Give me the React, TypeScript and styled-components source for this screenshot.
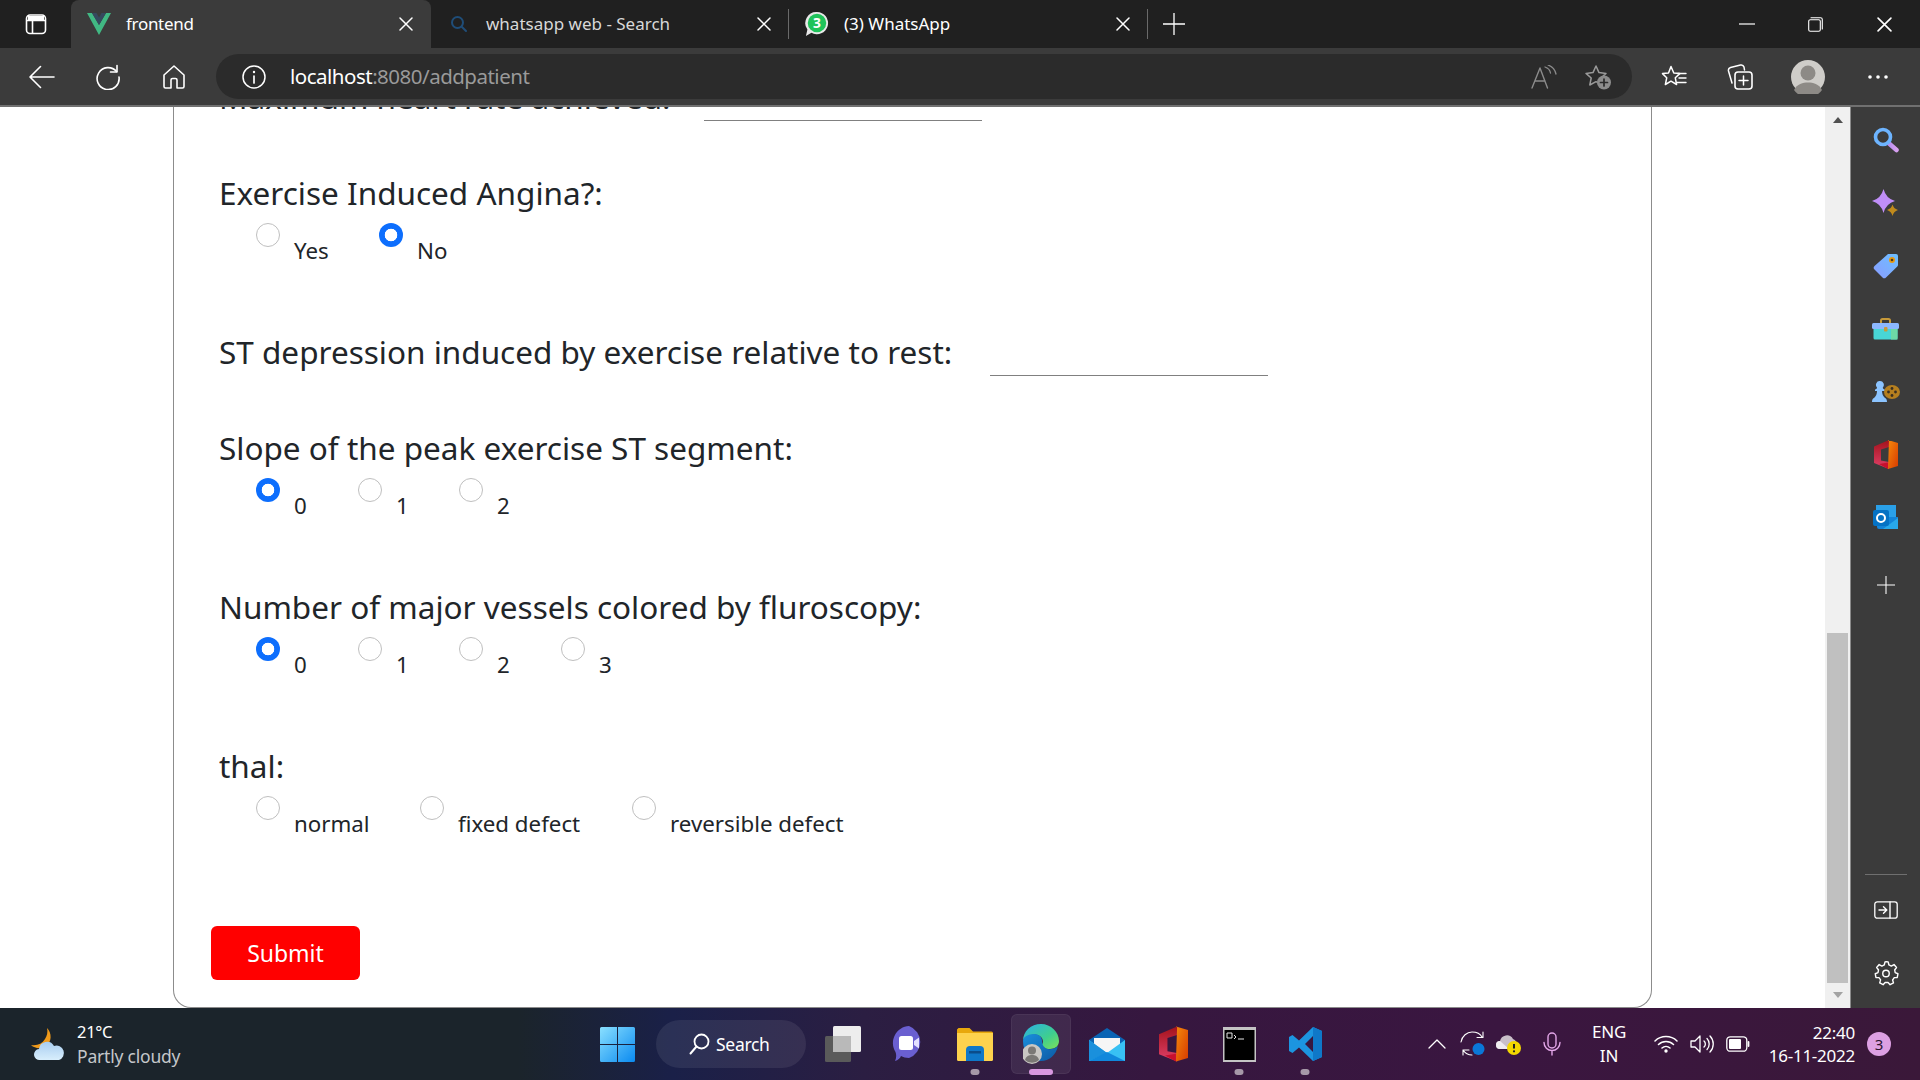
import React from 'react';
import styled, {createGlobalStyle} from 'styled-components';

const Global = createGlobalStyle`
  html, body { margin: 0; padding: 0; height: 1080px; overflow: hidden; background: #fff; }
  * { box-sizing: border-box; }
  body { font-family: "Noto Sans", "Open Sans", sans-serif; }
`;

const Screen = styled.div`
  width: 1920px;
  height: 1080px;
  display: flex;
  flex-direction: column;
  overflow: hidden;
`;

/* ---------- tab strip ---------- */
const TabStrip = styled.div`
  height: 48px;
  flex: none;
  background: #202020;
  display: flex;
  align-items: stretch;
  color: #fff;
  font-size: 17px;
`;
const WindowButton = styled.div`
  width: 71px;
  display: flex;
  align-items: center;
  justify-content: center;
`;
const Tab = styled.div<{$active?: boolean; $w: number}>`
  width: ${p => p.$w}px;
  display: flex;
  align-items: center;
  padding: 0 ${p => (p.$active ? 18 : 17)}px 0 16px;
  background: ${p => (p.$active ? '#3b3b3b' : 'transparent')};
  border-radius: 8px 8px 0 0;
`;
const TabIcon = styled.span`
  width: 24px;
  height: 24px;
  flex: none;
  display: flex;
  align-items: center;
  justify-content: center;
`;
const TabTitle = styled.span<{$dim?: boolean; $active?: boolean}>`
  flex: 1;
  margin: -2px 0 0 15px;
  white-space: nowrap;
  letter-spacing: ${p => (p.$active ? '-0.3px' : '0')};
  color: ${p => (p.$dim ? '#d8d8d8' : '#fff')};
`;
const TabSep = styled.div`
  width: 1px;
  height: 30px;
  background: #6a6a6a;
  align-self: center;
  flex: none;
`;
const NewTab = styled.div`
  width: 52px;
  display: flex;
  align-items: center;
  justify-content: center;
`;
const WindowControls = styled.div`
  margin-left: auto;
  display: flex;
  padding-right: 1px;
`;
const WindowControl = styled.div`
  width: 69px;
  display: flex;
  align-items: center;
  justify-content: center;
`;

/* ---------- toolbar ---------- */
const Toolbar = styled.div`
  height: 59px;
  flex: none;
  background: #3b3b3b;
  border-bottom: 2px solid #707070;
  display: flex;
  align-items: flex-start;
  padding: 6px 9px 0 9px;
`;
const ToolSlot = styled.div<{$w?: number}>`
  width: ${p => p.$w ?? 66}px;
  height: 45px;
  flex: none;
  display: flex;
  align-items: center;
  justify-content: center;
`;
const AddressBar = styled.div`
  width: 1416px;
  height: 45px;
  margin-left: 9px;
  margin-right: 9px;
  flex: none;
  background: #2b2b2b;
  border-radius: 23px;
  display: flex;
  align-items: center;
  padding-left: 26px;
`;
const AddressText = styled.div`
  margin: -2px 0 0 24px;
  flex: 1;
  font-size: 20.5px;
  letter-spacing: -0.5px;
  color: #fff;
  & > span { color: #9a9a9a; }
`;
const AddressAction = styled.div`
  width: 54px;
  display: flex;
  justify-content: center;
  &:last-child { margin-right: 7px; }
`;

/* ---------- page area ---------- */
const Main = styled.div`
  flex: 1;
  min-height: 0;
  display: flex;
`;
const Viewport = styled.div`
  flex: 1;
  min-width: 0;
  background: #fff;
  padding: 0 173px;
  overflow: hidden;
`;
const Card = styled.div`
  display: flow-root;
  height: 901px;
  border: 1px solid #8c8c8c;
  border-top: none;
  border-radius: 0 0 18px 18px;
  padding: 0 0 0 37px;
`;
const Form = styled.form`
  margin-top: -32px;
`;
const Field = styled.div`
  padding-left: 8px;
  margin-bottom: 48px;
`;
const TextRow = styled(Field)`
  display: flex;
  align-items: flex-end;
`;
const Heading = styled.label`
  display: block;
  font-size: 31.5px;
  line-height: 44px;
  height: 48px;
  color: #212529;
  white-space: nowrap;
`;
const TextInput = styled.input<{$gap: number}>`
  width: 278px;
  height: 40px;
  margin: 0 0 2px ${p => p.$gap}px;
  border: none;
  border-bottom: 1px solid #808080;
  outline: none;
  background: transparent;
`;
const Options = styled.div`
  height: 63px;
  padding: 4px 0 0 37px;
  display: flex;
`;
const Option = styled.label<{$w: number}>`
  width: ${p => p.$w}px;
  flex: none;
  display: flex;
  align-items: flex-start;
`;
const Radio = styled.input.attrs({type: 'radio'})`
  appearance: none;
  width: 24px;
  height: 24px;
  margin: 0;
  flex: none;
  border-radius: 50%;
  border: 1px solid #bfbfbf;
  background: #fff;
  &:checked {
    border: none;
    background: radial-gradient(circle, #fff 0, #fff 6px, #0d6efd 6.6px);
  }
`;
const OptionText = styled.span`
  margin: 12px 0 0 14px;
  font-size: 22.3px;
  line-height: 32px;
  color: #212529;
  white-space: nowrap;
`;
const SubmitButton = styled.button`
  display: block;
  width: 149px;
  height: 54px;
  margin-top: 71px;
  border: none;
  border-radius: 6px;
  background: #ff0000;
  color: #fff;
  font-family: inherit;
  font-size: 23px;
`;

/* ---------- scrollbar + sidebar ---------- */
const Scrollbar = styled.div`
  width: 26px;
  flex: none;
  background: #f0f0f0;
  border-right: 1px solid #8a8a8a;
  display: flex;
  flex-direction: column;
  align-items: center;
`;
const ScrollArrow = styled.div<{$down?: boolean}>`
  width: 0;
  height: 0;
  flex: none;
  margin: ${p => (p.$down ? '9px 0 0' : '10px 0 0')};
  border-left: 5.5px solid transparent;
  border-right: 5.5px solid transparent;
  ${p => (p.$down ? 'border-top: 6px solid #a3a3a3;' : 'border-bottom: 6px solid #505050;')}
`;
const ScrollThumb = styled.div`
  width: 21px;
  height: 350px;
  margin-top: 510px;
  background: #c0c0c0;
  flex: none;
`;
const Sidebar = styled.div`
  width: 69px;
  flex: none;
  background: #3b3b3b;
  display: flex;
  flex-direction: column;
  align-items: center;
  padding: 1px 0 4px;
`;
const SideSlot = styled.div<{$h?: number}>`
  width: 100%;
  height: ${p => p.$h ?? 63}px;
  flex: none;
  display: flex;
  align-items: center;
  justify-content: center;
`;
const SideDivider = styled.div`
  width: 42px;
  height: 1px;
  background: #6f6f6f;
  margin-top: auto;
  margin-bottom: 3px;
  flex: none;
`;

/* ---------- taskbar ---------- */
const Taskbar = styled.div`
  height: 72px;
  flex: none;
  background: linear-gradient(90deg, #1b242b 0, #1b242b 27%, #1a2048 35%, #2b1e42 45%, #36173f 60%, #3a1640 78%, #3a1839 100%);
  display: flex;
  align-items: center;
  color: #fff;
`;
const Weather = styled.div`
  width: 584px;
  flex: none;
  display: flex;
  align-items: center;
  padding-left: 30px;
`;
const WeatherText = styled.div`
  margin-left: 11px;
  font-size: 17.5px;
  line-height: 25px;
  letter-spacing: -0.2px;
  & > div:first-child { font-size: 16.5px; letter-spacing: -0.3px; }
  & > div:last-child { color: #c4c7ca; }
`;
const TaskSlot = styled.div`
  width: 66px;
  height: 60px;
  flex: none;
  position: relative;
  display: flex;
  align-items: center;
  justify-content: center;
`;
const ActiveSlot = styled(TaskSlot)`
  &::before {
    content: '';
    position: absolute;
    left: 3px;
    right: 3px;
    top: 0;
    bottom: 0;
    border-radius: 6px;
    background: rgba(255, 255, 255, 0.07);
    border: 1px solid rgba(255, 255, 255, 0.05);
  }
  & > svg { position: relative; }
`;
const RunDot = styled.span<{$active?: boolean}>`
  position: absolute;
  bottom: -1px;
  left: 50%;
  transform: translateX(-50%);
  width: ${p => (p.$active ? 24 : 9)}px;
  height: 6px;
  border-radius: 3px;
  background: ${p => (p.$active ? '#d998e0' : '#a698a8')};
`;
const SearchPill = styled.div`
  width: 150px;
  height: 48px;
  flex: none;
  margin: 0 4px 0 6px;
  border-radius: 24px;
  background: rgba(255, 255, 255, 0.08);
  display: flex;
  align-items: center;
  padding-left: 33px;
  font-size: 17.5px;
  letter-spacing: -0.3px;
  gap: 6px;
`;
const Tray = styled.div`
  margin-left: 81px;
  display: flex;
  align-items: center;
  flex: 1;
`;
const TraySlot = styled.div<{$w?: number; $gap?: number}>`
  width: ${p => p.$w ?? 36}px;
  margin-left: ${p => p.$gap ?? 0}px;
  flex: none;
  display: flex;
  align-items: center;
  justify-content: center;
`;
const LangText = styled.div`
  font-size: 17px;
  line-height: 24px;
  text-align: center;
  letter-spacing: -0.2px;
`;
const Clock = styled.div`
  width: 99px;
  flex: none;
  text-align: right;
  font-size: 17px;
  line-height: 23px;
  letter-spacing: -0.25px;
`;
const Badge = styled.div`
  width: 24px;
  height: 24px;
  margin-left: 12px;
  border-radius: 50%;
  flex: none;
  background: #dda0e3;
  color: #2b1430;
  font-size: 15px;
  display: flex;
  align-items: center;
  justify-content: center;
`;

/* ---------- drawings ---------- */
type IconProps = {s?: number; c?: string};
const stroke = (c: string, w = 1.5) => ({fill: 'none', stroke: c, strokeWidth: w, strokeLinecap: 'round' as const, strokeLinejoin: 'round' as const});

const XIcon = ({s = 14, c = '#fff'}: IconProps) => (
  <svg width={s} height={s} viewBox="0 0 14 14"><path d="M1 1l12 12M13 1L1 13" {...stroke(c, 1.5)}/></svg>
);
const PlusIcon = ({s = 22, c = '#fff'}: IconProps) => (
  <svg width={s} height={s} viewBox="0 0 22 22"><path d="M11 0v22M0 11h22" {...stroke(c, 1.3)}/></svg>
);
const TabsIcon = () => (
  <svg width="22" height="22" viewBox="0 0 22 22"><rect x="1.5" y="2" width="19" height="18.5" rx="3.5" {...stroke('#fff', 1.6)}/><path d="M2 7.5h18M7.5 7.5v12.5" {...stroke('#fff', 1.6)}/><path d="M3 3h16v4.5H3z" fill="#fff"/></svg>
);
const VueLogo = () => (
  <svg width="24" height="22" viewBox="0 0 24 22"><path d="M0 0h5l7 12 7-12h5L12 22z" fill="#41b883"/><path d="M5 0h4.5L12 4.5 14.5 0H19l-7 12z" fill="#35495e"/></svg>
);
const BingSearch = () => (
  <svg width="18" height="18" viewBox="0 0 18 18"><circle cx="7.5" cy="7.5" r="5.5" {...stroke('#1f4d78', 2)}/><path d="M12 12l4 4" {...stroke('#1f4d78', 2)}/></svg>
);
const WhatsAppBadge = () => (
  <svg width="26" height="28" viewBox="0 0 26 28">
    <path d="M13 1a12 12 0 1 1-6 22.4L1 27l1.6-7A12 12 0 0 1 13 1z" fill="#e8e8e8"/>
    <circle cx="13" cy="13" r="10" fill="#1fc35a"/>
    <text x="13" y="18.5" textAnchor="middle" fontSize="15" fontWeight="700" fill="#fff" fontFamily="Noto Sans">3</text>
  </svg>
);
const BackIcon = () => (
  <svg width="26" height="24" viewBox="0 0 26 24"><path d="M25 12H1.5M11.5 1.5L1 12l10.5 10.5" {...stroke('#fff', 1.6)}/></svg>
);
const RefreshIcon = () => (
  <svg width="26" height="26" viewBox="0 0 26 26"><path d="M21.5 7.5A11 11 0 1 0 24 13" {...stroke('#fff', 1.6)}/><path d="M22 1.5v6.5h-6.5" {...stroke('#fff', 1.6)}/></svg>
);
const HomeIcon = () => (
  <svg width="24" height="26" viewBox="0 0 24 26"><path d="M12 2L2 11v11.5a1.5 1.5 0 0 0 1.5 1.5H9v-8a1.5 1.5 0 0 1 1.5-1.5h3A1.5 1.5 0 0 1 15 16v8h5.5a1.5 1.5 0 0 0 1.5-1.5V11z" {...stroke('#fff', 1.6)}/></svg>
);
const InfoIcon = () => (
  <svg width="24" height="24" viewBox="0 0 24 24"><circle cx="12" cy="12" r="11" {...stroke('#fff', 1.5)}/><path d="M12 11v7" {...stroke('#fff', 1.7)}/><circle cx="12" cy="7" r="1.2" fill="#fff"/></svg>
);
const ReadAloudIcon = () => (
  <svg width="26" height="24" viewBox="0 0 26 24"><path d="M1 23L9 3l7.5 20M4 16h10" {...stroke('#8c8c8c', 1.4)}/><path d="M14 2c3 1 5 3 5.5 6M17 0c4 1.5 7 4.5 8 9" {...stroke('#8c8c8c', 1.3)}/></svg>
);
const StarPath = 'M12 2l3 6.6 7 .8-5.2 4.8 1.4 7-6.2-3.5L5.8 21l1.4-7L2 9.4l7-.8z';
const FavAddIcon = () => (
  <svg width="28" height="26" viewBox="0 0 28 26"><path d={StarPath} {...stroke('#9a9a9a', 1.5)}/><circle cx="20" cy="18.5" r="7" fill="#8c8c8c"/><path d="M20 15v7M16.5 18.5h7" {...stroke('#2b2b2b', 1.7)}/></svg>
);
const FavoritesIcon = () => (
  <svg width="26" height="24" viewBox="0 0 26 24"><path d="M10 1.5l2.8 6.5 6 .6-4.500 4.200 1.300 6.700-5.600-3.300-5.600 3.300 1.300-6.700L1.500 8.600l6-.6z" {...stroke('#fff', 1.5)}/><path d="M17 8.500h8M18 13h7M16 17.500h9" {...stroke('#fff', 1.4)}/></svg>
);
const CollectionsIcon = () => (
  <svg width="26" height="26" viewBox="0 0 26 26"><path d="M5 19L1.500 7a3 3 0 0 1 2-3.500l10-2.500a3 3 0 0 1 3.500 2l.5 3" {...stroke('#fff', 1.5)}/><rect x="8" y="8" width="17" height="17" rx="3" {...stroke('#fff', 1.6)}/><path d="M16.500 12v9M12 16.500h9" {...stroke('#fff', 1.5)}/></svg>
);
const Avatar = () => (
  <svg width="34" height="34" viewBox="0 0 34 34"><circle cx="17" cy="17" r="17" fill="#cfcdc9"/><circle cx="17" cy="13" r="7.500" fill="#8d8a86"/><path d="M3 30c3-6 9-7.500 14-7.500S28 24 31 30a17 17 0 0 1-28 0z" fill="#8d8a86"/></svg>
);
const DotsIcon = () => (
  <svg width="20" height="4" viewBox="0 0 20 4"><circle cx="2" cy="2" r="1.800" fill="#fff"/><circle cx="10" cy="2" r="1.800" fill="#fff"/><circle cx="18" cy="2" r="1.800" fill="#fff"/></svg>
);
const MinIcon = () => <svg width="16" height="2" viewBox="0 0 16 2"><path d="M0 1h16" stroke="#fff" strokeWidth="1.2"/></svg>;
const RestoreIcon = () => (
  <svg width="15" height="15" viewBox="0 0 15 15"><rect x=".7" y="2.700" width="11.600" height="11.600" rx="1.600" {...stroke('#fff', 1.1)}/><path d="M3 .7h9.500a1.800 1.800 0 0 1 1.800 1.800V12" {...stroke('#fff', 1.1)}/></svg>
);

const SideSearch = () => (
  <svg width="26" height="26" viewBox="0 0 26 26"><defs><linearGradient id="sh" x1="0" x2="1"><stop offset="0" stopColor="#b48cf0"/><stop offset="1" stopColor="#d8a0f0"/></linearGradient></defs><path d="M15.500 16l8 7" stroke="url(#sh)" strokeWidth="4.500" strokeLinecap="round"/><circle cx="10" cy="10" r="7.500" fill="none" stroke="#6db4ff" strokeWidth="3.600"/></svg>
);
const SideSparkle = () => (
  <svg width="27" height="27" viewBox="0 0 27 27"><path d="M11.500 0Q14 9.500 23 12Q14 14.500 11.500 24Q9 14.500 0 12Q9 9.500 11.500 0z" fill="#c08ef8"/><path d="M20.500 15.500Q21.500 19.500 26 21Q21.500 22.500 20.500 27Q19.500 22.500 15 21Q19.500 19.500 20.500 15.500z" fill="#c08a1c"/></svg>
);
const SideTag = () => (
  <svg width="26" height="26" viewBox="0 0 26 26"><defs><linearGradient id="tg" x1="0" y1="1" x2="1" y2="0"><stop offset="0" stopColor="#8a9cff"/><stop offset="1" stopColor="#6cc0ff"/></linearGradient></defs><path d="M15 1h8a2 2 0 0 1 2 2v9a2 2 0 0 1-.7 1.500L13 24.500a2.500 2.500 0 0 1-3.500 0L1.500 16.500a2.500 2.500 0 0 1 0-3.500z" fill="url(#tg)"/><circle cx="19" cy="7" r="3" fill="#e89a10"/><circle cx="19" cy="7" r="1.300" fill="#4a3a20"/></svg>
);
const SideToolbox = () => (
  <svg width="27" height="22" viewBox="0 0 27 22"><path d="M9 5V2.500a1.500 1.500 0 0 1 1.500-1.500h6A1.500 1.500 0 0 1 18 2.500V5" fill="none" stroke="#c79a3a" strokeWidth="2"/><rect x="1.500" y="8" width="24" height="13.500" rx="1.500" fill="#48d6d6"/><rect x="19" y="8" width="6.500" height="13.500" fill="#6ed9a6"/><rect x="0" y="5" width="27" height="6" rx="1.500" fill="#8cb8ff"/><rect x="12" y="9" width="3.500" height="4.500" rx="1" fill="#c79a3a"/></svg>
);
const SideGames = () => (
  <svg width="28" height="22" viewBox="0 0 28 22"><path d="M8 0a3.800 3.800 0 0 1 2.800 6.400c0 1 .7 1.600 2 2v1.500H10c0 3 1 5 3 7 1.500.5 2 2 2 4.100H0c0-2 .5-3.600 2-4.100 2-2 3-4 3-7H3V8.400c1.300-.4 2-1 2-2A3.800 3.800 0 0 1 8 0z" fill="#8cc4ff"/><ellipse cx="20" cy="11" rx="8" ry="7" fill="#b57f1f"/><g fill="#3b2f20"><circle cx="20" cy="7.500" r="1.400"/><circle cx="16.500" cy="11" r="1.400"/><circle cx="23.500" cy="11" r="1.400"/><circle cx="20" cy="14.500" r="1.400"/></g></svg>
);
const OfficeIcon = ({w = 24, h = 29}: {w?: number; h?: number}) => (
  <svg width={w} height={h} viewBox="0 0 24 29"><defs><linearGradient id="of" x1="0" y1="0" x2="1" y2="1"><stop offset="0" stopColor="#f58a0b"/><stop offset="1" stopColor="#d83b01"/></linearGradient><linearGradient id="ofr" x1="0" y1="0" x2="0" y2="1"><stop offset="0" stopColor="#a3121b"/><stop offset="1" stopColor="#e0416a"/></linearGradient></defs><path d="M0 6.500L15 0v7L7 9.500v11l8 1.500v7L0 23z" fill="url(#ofr)"/><path d="M14 0l10 3v23l-10 3 1-29z" fill="url(#of)"/><path d="M5 24l9-1.500V29z" fill="#c8102e"/></svg>
);
const OutlookIcon = () => (
  <svg width="25" height="25" viewBox="0 0 25 25"><rect x="3" y="0" width="20" height="12" fill="#2aa0e8"/><path d="M4 12h21v10a2 2 0 0 1-2 2H6a2 2 0 0 1-2-2z" fill="#1384d8"/><path d="M10 24L25 13v11z" fill="#28a8ea"/><rect x="0" y="5" width="16" height="16" rx="2" fill="#0572c4"/><circle cx="8" cy="13" r="4" fill="none" stroke="#fff" strokeWidth="2"/></svg>
);
const SidePaneIcon = () => (
  <svg width="24" height="18" viewBox="0 0 24 18"><rect x=".8" y=".8" width="22.400" height="16.400" rx="2.500" {...stroke('#fff', 1.3)}/><path d="M16 1v16M5 9h7.500M9.500 5.800L12.800 9l-3.300 3.200" {...stroke('#fff', 1.4)}/></svg>
);
const GearIcon = () => (
  <svg width="26" height="26" viewBox="0 0 24 24"><path d="M12.200 1.500l1.800.3.700 2.800 2.200 1 2.500-1.400 2.300 2.700-1.700 2.300.5 2.400 2.500 1.100-.6 3.400-2.800.2-1.400 2-.1.100.8 2.700-3.100 1.700-1.900-2.100h-2.700l-1.900 2.100-3.100-1.700.8-2.800-1.500-2-2.800-.2-.6-3.400 2.500-1.100.5-2.400-1.700-2.300 2.300-2.700 2.500 1.400 2.200-1 .7-2.800z" {...stroke('#fff', 1.3)}/><circle cx="12" cy="12.500" r="3" {...stroke('#fff', 1.3)}/></svg>
);

const WeatherIcon = () => (
  <svg width="36" height="33" viewBox="0 0 36 33"><defs><linearGradient id="cl" x1="0" y1="0" x2="0" y2="1"><stop offset="0" stopColor="#a8cdf0"/><stop offset="1" stopColor="#d8eefc"/></linearGradient></defs><path d="M17 0c5 5 5 14-1 18-4 3-11 3-15-1 6 1 11-1 14-6 2-3 3-7 2-11z" fill="#f09a1a"/><path d="M10 32a5.500 5.500 0 0 1-1-11 8 8 0 0 1 15-3 7 7 0 0 1 5 14z" fill="url(#cl)"/></svg>
);
const StartIcon = () => (
  <svg width="35" height="35" viewBox="0 0 35 35"><defs><linearGradient id="st" x1="0" y1="0" x2="1" y2="1"><stop offset="0" stopColor="#8ae0ff"/><stop offset="1" stopColor="#0a8af0"/></linearGradient></defs><path d="M1.500 0H17v17H0V1.500A1.500 1.500 0 0 1 1.500 0zM18 0h15.500A1.500 1.500 0 0 1 35 1.500V17H18zM0 18h17v17H1.500A1.500 1.500 0 0 1 0 33.500zM18 18h17v15.500a1.500 1.500 0 0 1-1.500 1.500H18z" fill="url(#st)"/></svg>
);
const SearchGlyph = () => (
  <svg width="21" height="22" viewBox="0 0 21 22"><circle cx="12.500" cy="8.500" r="7" {...stroke('#fff', 1.8)}/><path d="M7.500 13.500L1.500 20.500" {...stroke('#fff', 2)}/></svg>
);
const TaskViewIcon = () => (
  <svg width="36" height="36" viewBox="0 0 36 36"><rect x="0" y="10" width="26" height="26" rx="1.500" fill="#5a5a5a"/><rect x="8" y="0" width="28" height="26" rx="1.500" fill="#ededed"/><rect x="8" y="10" width="18" height="16" fill="#b9b9b9"/></svg>
);
const TeamsIcon = () => (
  <svg width="34" height="36" viewBox="0 0 34 36"><path d="M17 0a17 17 0 0 1 0 32c-3 0-6-.8-8-2-1 2.500-3 4-6 5 1.500-3 1.500-6 .5-9A17 17 0 0 1 17 0z" fill="#6a5fd0"/><rect x="7" y="10" width="14" height="14" rx="2.500" fill="#fff"/><path d="M22 15l5-3.500v11L22 19z" fill="#e3e0ff"/></svg>
);
const FolderIcon = () => (
  <svg width="36" height="33" viewBox="0 0 36 33"><path d="M1.500 0h11l3.500 3.500h18.500A1.500 1.500 0 0 1 36 5v3H0V1.500z" fill="#e8a80c"/><path d="M0 5h36v26.500a1.500 1.500 0 0 1-1.500 1.500h-33A1.500 1.500 0 0 1 0 31.500z" fill="#fdd24d"/><path d="M9 33V22a4 4 0 0 1 4-4h10a4 4 0 0 1 4 4v11z" fill="#0f78c8"/><rect x="12" y="23" width="12" height="2.500" fill="#0b4d8a"/></svg>
);
const EdgeIcon = () => (
  <svg width="36" height="40" viewBox="0 0 36 40"><defs><linearGradient id="eg" x1="0" y1="0" x2="1" y2="1"><stop offset="0" stopColor="#2bb0e8"/><stop offset=".6" stopColor="#3fcf8e"/><stop offset="1" stopColor="#7ee05a"/></linearGradient><linearGradient id="eb" x1="0" y1="0" x2="1" y2="1"><stop offset="0" stopColor="#1a8fdc"/><stop offset="1" stopColor="#0c59a4"/></linearGradient></defs><path d="M0 17C0 7 8 0 18 0c10 0 18 8 18 17 0 5-4 8-9 8-5 0-8-2-8-4 0-1 1-1.500 1-3.500 0-4-4-7-8-7-6 0-12 3-12 6.500z" fill="url(#eg)"/><path d="M0 17c0-4 5-7 11-7 5 0 8 3 8 7 0 6 5 9 9 8 2 0 5-1 7-3-2 9-9 15-17 15C8 37 0 29 0 17z" fill="url(#eb)"/><circle cx="9" cy="30" r="10" fill="#c9c7c3"/><circle cx="9" cy="26.500" r="4" fill="#7a7875"/><path d="M2 36c1-4 4-5 7-5s6 1 7 5a10 10 0 0 1-14 0z" fill="#7a7875"/></svg>
);
const MailIcon = () => (
  <svg width="36" height="33" viewBox="0 0 36 33"><path d="M18 0L0 12v4h36v-4z" fill="#0a64b4"/><path d="M5 10h26v8L18 26 5 18z" fill="#f6f6f6"/><path d="M0 12l18 13 18-13v21H0z" fill="#38c1f4"/><path d="M0 12l18 13L0 33z" fill="#1a90dc"/><path d="M36 33H0l18-9z" fill="#1088dc"/></svg>
);
const TerminalIcon = () => (
  <svg width="33" height="35" viewBox="0 0 33 35"><rect width="33" height="35" fill="#c4c4c4"/><rect x="1.500" y="3" width="30" height="30" fill="#000"/><path d="M4 6h5v5H4zM11 8l2 2-2 2M15 12h6" fill="none" stroke="#e8e8e8" strokeWidth="1"/></svg>
);
const VSCodeIcon = () => (
  <svg width="33" height="34" viewBox="0 0 33 34"><path d="M24 0l9 4v26l-9 4-14-13.500L3.500 26 0 24V10l3.500-2L10 13.500zM24 9l-8 8 8 8z" fill="#1c95e0"/><path d="M24 0l9 4v26l-9 4z" fill="#0f78c8"/></svg>
);
const ChevronUp = () => (
  <svg width="18" height="10" viewBox="0 0 18 10"><path d="M1 9l8-8 8 8" {...stroke('#fff', 1.3)}/></svg>
);
const SyncIcon = () => (
  <svg width="26" height="26" viewBox="0 0 26 26"><path d="M1 11C2 5 7 1 12 1c4 0 8 1 10 5M23 1v5.500h-6M3 24v-5h6M3 19c2 3 5 5 9 5" {...stroke('#fff', 1.1)}/><circle cx="18.500" cy="18" r="6" fill="#0a78d8"/></svg>
);
const CloudWarnIcon = () => (
  <svg width="26" height="22" viewBox="0 0 26 22"><path d="M4 16a4 4 0 0 1 0-8 7 7 0 0 1 13-2 5 5 0 0 1 3 6v4z" fill="#c9bfc9"/><path d="M4 16a4 4 0 0 1 0-8l9 8z" fill="#f0ecf0"/><circle cx="18" cy="15" r="7" fill="#f4d800"/><path d="M18 11v4.500" stroke="#222" strokeWidth="2"/><circle cx="18" cy="18.300" r="1.100" fill="#222"/></svg>
);
const MicIcon = () => (
  <svg width="18" height="24" viewBox="0 0 18 24"><rect x="5" y="1" width="8" height="15" rx="4" {...stroke('#e3a6e8', 1.4)}/><path d="M1 10.500a8 8 0 0 0 16 0M9 19v4" {...stroke('#e3a6e8', 1.4)}/></svg>
);
const WifiIcon = () => (
  <svg width="24" height="18" viewBox="0 0 24 18"><path d="M1 6a16 16 0 0 1 22 0M4.500 9.500a11 11 0 0 1 15 0M8 13a6 6 0 0 1 8 0" {...stroke('#fff', 1.5)}/><circle cx="12" cy="16" r="1.700" fill="#fff"/></svg>
);
const SpeakerIcon = () => (
  <svg width="24" height="20" viewBox="0 0 24 20"><path d="M1 7v6h4l5 5V2L5 7z" {...stroke('#fff', 1.3)}/><path d="M14 7a4 4 0 0 1 0 6M17 4.500a8 8 0 0 1 0 11M20 2a11.500 11.500 0 0 1 0 16" {...stroke('#fff', 1.3)}/></svg>
);
const BatteryIcon = () => (
  <svg width="24" height="16" viewBox="0 0 24 16"><rect x=".8" y=".8" width="20" height="14.400" rx="3.500" {...stroke('#fff', 1.3)}/><rect x="3" y="3" width="12" height="10" rx="1" fill="#fff"/><path d="M22.500 6v4" {...stroke('#fff', 1.8)}/></svg>
);

const radioGroups = {
  angina: [{t: 'Yes', w: 123}, {t: 'No', w: 100, on: true}],
  slope: [{t: '0', w: 102, on: true}, {t: '1', w: 101}, {t: '2', w: 101}],
  vessels: [{t: '0', w: 102, on: true}, {t: '1', w: 101}, {t: '2', w: 102}, {t: '3', w: 100}],
  thal: [{t: 'normal', w: 164}, {t: 'fixed defect', w: 212}, {t: 'reversible defect', w: 240}],
};

type Choice = {t: string; w: number; on?: boolean};
function RadioField({title, name, items}: {title: string; name: string; items: Choice[]}) {
  return (
    <Field>
      <Heading>{title}</Heading>
      <Options>
        {items.map(item => (
          <Option key={item.t} $w={item.w}>
            <Radio name={name} defaultChecked={item.on}/>
            <OptionText>{item.t}</OptionText>
          </Option>
        ))}
      </Options>
    </Field>
  );
}

export default function App() {
  return (
    <Screen>
      <Global/>
      <TabStrip>
        <WindowButton><TabsIcon/></WindowButton>
        <Tab $active $w={360}>
          <TabIcon><VueLogo/></TabIcon>
          <TabTitle $active>frontend</TabTitle>
          <XIcon/>
        </Tab>
        <Tab $w={357}>
          <TabIcon><BingSearch/></TabIcon>
          <TabTitle $dim>whatsapp web - Search</TabTitle>
          <XIcon/>
        </Tab>
        <TabSep/>
        <Tab $w={358}>
          <TabIcon><WhatsAppBadge/></TabIcon>
          <TabTitle>(3) WhatsApp</TabTitle>
          <XIcon/>
        </Tab>
        <TabSep/>
        <NewTab><PlusIcon/></NewTab>
        <WindowControls>
          <WindowControl><MinIcon/></WindowControl>
          <WindowControl><RestoreIcon/></WindowControl>
          <WindowControl><XIcon s={15}/></WindowControl>
        </WindowControls>
      </TabStrip>

      <Toolbar>
        <ToolSlot><BackIcon/></ToolSlot>
        <ToolSlot><RefreshIcon/></ToolSlot>
        <ToolSlot><HomeIcon/></ToolSlot>
        <AddressBar>
          <InfoIcon/>
          <AddressText>localhost<span>:8080/addpatient</span></AddressText>
          <AddressAction><ReadAloudIcon/></AddressAction>
          <AddressAction><FavAddIcon/></AddressAction>
        </AddressBar>
        <ToolSlot><FavoritesIcon/></ToolSlot>
        <ToolSlot><CollectionsIcon/></ToolSlot>
        <ToolSlot $w={70}><Avatar/></ToolSlot>
        <ToolSlot $w={70}><DotsIcon/></ToolSlot>
      </Toolbar>

      <Main>
        <Viewport>
          <Card>
            <Form>
              <TextRow>
                <Heading>Maximum heart rate achieved:</Heading>
                <TextInput $gap={33}/>
              </TextRow>
              <RadioField title="Exercise Induced Angina?:" name="angina" items={radioGroups.angina}/>
              <TextRow>
                <Heading>ST depression induced by exercise relative to rest:</Heading>
                <TextInput $gap={38}/>
              </TextRow>
              <RadioField title="Slope of the peak exercise ST segment:" name="slope" items={radioGroups.slope}/>
              <RadioField title="Number of major vessels colored by fluroscopy:" name="vessels" items={radioGroups.vessels}/>
              <RadioField title="thal:" name="thal" items={radioGroups.thal}/>
              <SubmitButton type="button">Submit</SubmitButton>
            </Form>
          </Card>
        </Viewport>
        <Scrollbar>
          <ScrollArrow/>
          <ScrollThumb/>
          <ScrollArrow $down/>
        </Scrollbar>
        <Sidebar>
          <SideSlot><SideSearch/></SideSlot>
          <SideSlot><SideSparkle/></SideSlot>
          <SideSlot><SideTag/></SideSlot>
          <SideSlot><SideToolbox/></SideSlot>
          <SideSlot><SideGames/></SideSlot>
          <SideSlot><OfficeIcon/></SideSlot>
          <SideSlot><OutlookIcon/></SideSlot>
          <SideSlot $h={71}><PlusIcon s={18}/></SideSlot>
          <SideDivider/>
          <SideSlot><SidePaneIcon/></SideSlot>
          <SideSlot><GearIcon/></SideSlot>
        </Sidebar>
      </Main>

      <Taskbar>
        <Weather>
          <WeatherIcon/>
          <WeatherText>
            <div>21°C</div>
            <div>Partly cloudy</div>
          </WeatherText>
        </Weather>
        <TaskSlot><StartIcon/></TaskSlot>
        <SearchPill><SearchGlyph/>Search</SearchPill>
        <TaskSlot><TaskViewIcon/></TaskSlot>
        <TaskSlot><TeamsIcon/></TaskSlot>
        <TaskSlot><FolderIcon/><RunDot/></TaskSlot>
        <ActiveSlot><EdgeIcon/><RunDot $active/></ActiveSlot>
        <TaskSlot><MailIcon/></TaskSlot>
        <TaskSlot><OfficeIcon w={29} h={36}/></TaskSlot>
        <TaskSlot><TerminalIcon/><RunDot/></TaskSlot>
        <TaskSlot><VSCodeIcon/><RunDot/></TaskSlot>
        <Tray>
          <TraySlot><ChevronUp/></TraySlot>
          <TraySlot><SyncIcon/></TraySlot>
          <TraySlot><CloudWarnIcon/></TraySlot>
          <TraySlot $gap={7}><MicIcon/></TraySlot>
          <TraySlot $w={78}><LangText>ENG<br/>IN</LangText></TraySlot>
          <TraySlot><WifiIcon/></TraySlot>
          <TraySlot><SpeakerIcon/></TraySlot>
          <TraySlot><BatteryIcon/></TraySlot>
          <Clock>22:40<br/>16-11-2022</Clock>
          <Badge>3</Badge>
        </Tray>
      </Taskbar>
    </Screen>
  );
}
